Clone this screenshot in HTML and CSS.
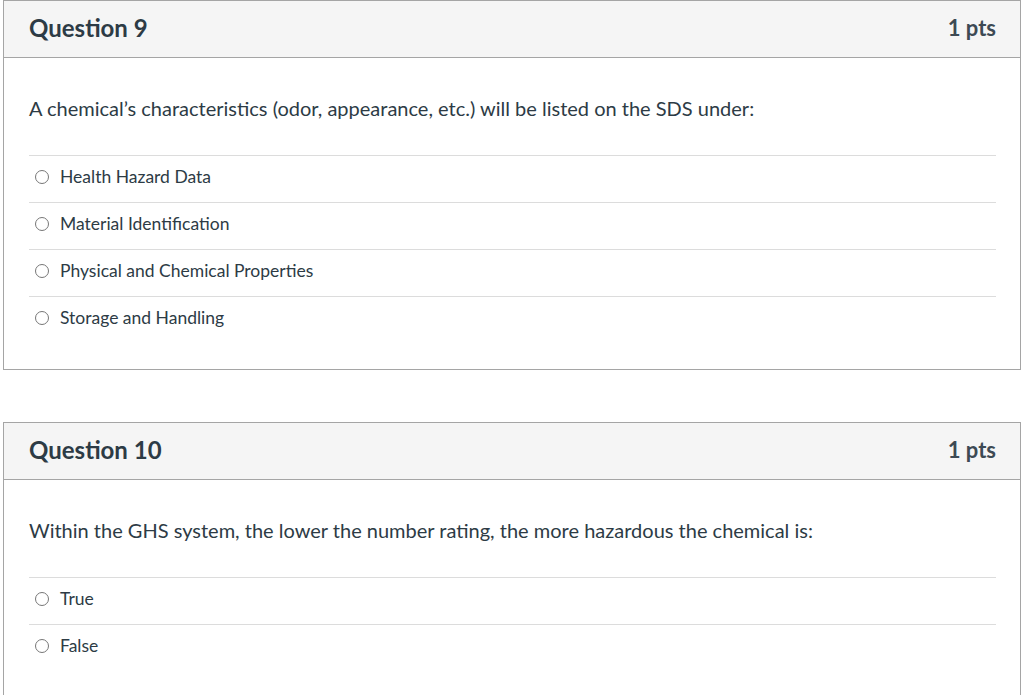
FILE: index.html
```html
<!DOCTYPE html>
<html>
<head>
<meta charset="utf-8">
<link rel="stylesheet" href="styles.css">
</head>
<body>
<div class="page">
  <div class="card">
    <div class="card-header">
      <h2 class="q-title">Question 9</h2>
      <span class="q-pts">1 pts</span>
    </div>
    <div class="card-body">
      <p class="q-text">A chemical’s characteristics (odor, appearance, etc.) will be listed on the SDS under:</p>
      <div class="answers">
        <div class="answer"><span class="radio"></span><span class="label">Health Hazard Data</span></div>
        <div class="answer"><span class="radio"></span><span class="label">Material Identification</span></div>
        <div class="answer"><span class="radio"></span><span class="label">Physical and Chemical Properties</span></div>
        <div class="answer"><span class="radio"></span><span class="label">Storage and Handling</span></div>
      </div>
    </div>
  </div>
  <div class="card">
    <div class="card-header">
      <h2 class="q-title">Question 10</h2>
      <span class="q-pts">1 pts</span>
    </div>
    <div class="card-body">
      <p class="q-text">Within the GHS system, the lower the number rating, the more hazardous the chemical is:</p>
      <div class="answers">
        <div class="answer"><span class="radio"></span><span class="label">True</span></div>
        <div class="answer"><span class="radio"></span><span class="label">False</span></div>
      </div>
    </div>
  </div>
</div>
</body>
</html>
```
FILE: styles.css
```css
html, body {
  margin: 0;
  padding: 0;
  background: #ffffff;
}
body {
  font-family: Lato, "Open Sans", "Liberation Sans", sans-serif;
  color: #2d3b45;
}
.page {
  padding: 0 1px 0 3px;
}
.card {
  border: 1px solid #a5a5a5;
  margin-bottom: 52px;
}
.card-header {
  display: flex;
  justify-content: space-between;
  align-items: center;
  box-sizing: border-box;
  height: 57px;
  padding: 0 24px 3px 25px;
  background: #f5f5f5;
  border-bottom: 1px solid #a5a5a5;
}
.q-title {
  margin: 0;
  font-size: 24px;
  font-weight: 700;
  line-height: 28px;
}
.q-pts {
  font-size: 22px;
  font-weight: 700;
  line-height: 28px;
  color: #3d4a54;
}
.card-body {
  padding: 0 24px 26px 25px;
}
.q-text {
  margin: 0;
  padding: 38px 0 35px;
  font-size: 20px;
  line-height: 24px;
}
.answer {
  display: flex;
  align-items: flex-start;
  box-sizing: border-box;
  height: 47px;
  border-top: 1px solid #dcdcdc;
  padding: 9px 0 0 6px;
}
.radio {
  width: 12px;
  height: 12px;
  margin-top: 5px;
  border: 1px solid #777777;
  border-radius: 50%;
  margin-right: 11px;
  flex: none;
}
.label {
  font-size: 17.5px;
  line-height: 24px;
}
```
